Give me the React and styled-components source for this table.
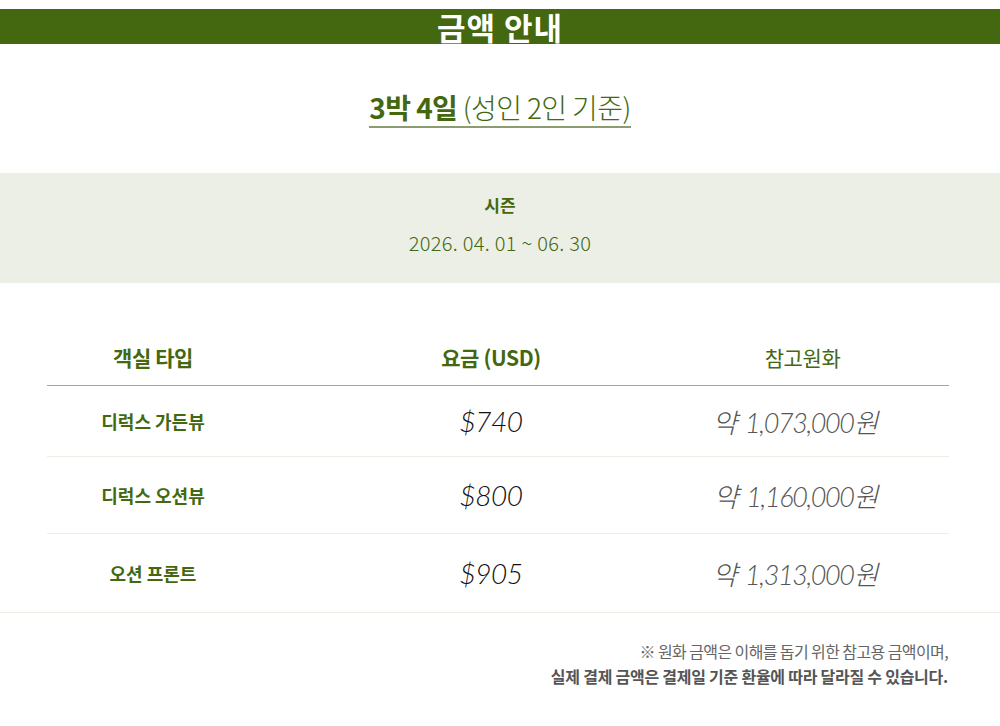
import React from "react";
import styled, { createGlobalStyle } from "styled-components";

const GREEN = "#43680f";

const Global = createGlobalStyle`
  html, body { margin: 0; padding: 0; background: #fff; }
  body { font-family: "Noto Sans CJK KR", "Noto Sans", sans-serif; }
  * { box-sizing: border-box; }
`;

const Page = styled.div`
  width: 1000px;
  padding-top: 9px;
`;

const HeaderBar = styled.h1`
  margin: 0;
  height: 35px;
  background: ${GREEN};
  color: #fff;
  text-align: center;
  font-size: 31px;
  line-height: 35px;
  font-weight: 700;
  letter-spacing: 1px;
`;

const SubtitleWrap = styled.div`
  display: flex;
  justify-content: center;
  margin-top: 48px;
`;

const Subtitle = styled.h2`
  margin: 0;
  display: inline-block;
  font-size: 28px;
  line-height: 30px;
  color: ${GREEN};
  font-weight: 300;
  letter-spacing: -0.6px;
  padding-bottom: 4px;
  border-bottom: 2px solid #8a9c70;
  b { font-weight: 700; }
`;

const Season = styled.section`
  margin-top: 45px;
  height: 110px;
  background: #ecefe6;
  display: flex;
  flex-direction: column;
  align-items: center;
  padding-top: 20px;
  gap: 13px;
  color: ${GREEN};
`;

const SeasonLabel = styled.div`
  font-size: 17px;
  line-height: 24px;
  font-weight: 700;
`;

const SeasonDate = styled.div`
  font-size: 20px;
  line-height: 26px;
  font-weight: 300;
  letter-spacing: 0.3px;
`;

const TableSection = styled.section`
  margin-top: 46px;
  padding: 0 51px 0 47px;
  border-bottom: 1px solid #eceee6;
`;

const Row = styled.div`
  display: grid;
  grid-template-columns: 212px 464px 1fr;
  align-items: center;
  height: ${(p) => p.$h}px;
  border-bottom: ${(p) => (p.$head ? "1px solid #9fab89" : p.$last ? "none" : "1px solid #eceee6")};
`;

const HeadCell = styled.div`
  text-align: center;
  font-size: 21px;
  font-weight: ${(p) => (p.$light ? 400 : 700)};
  color: ${GREEN};
  letter-spacing: -0.4px;
  padding-right: ${(p) => (p.$pr ? p.$pr : 0)}px;
`;

const RoomName = styled.div`
  text-align: center;
  font-size: 18px;
  font-weight: 700;
  color: ${GREEN};
`;

const Price = styled.div`
  text-align: center;
  font-family: "Lato", "Noto Sans", sans-serif;
  font-style: italic;
  font-weight: 300;
  font-size: 28px;
  color: #111;
  letter-spacing: -0.5px;
`;

const Won = styled.div`
  display: flex;
  justify-content: flex-end;
  min-width: 0;
  white-space: nowrap;
  padding-right: 72px;
  font-family: "Lato", "Noto Sans CJK KR", sans-serif;
  font-style: italic;
  font-weight: 300;
  font-size: 27px;
  color: #555;
  letter-spacing: -1.4px;
  word-spacing: 4px;
`;

const Note = styled.div`
  margin-top: 26px;
  padding-right: 52px;
  text-align: right;
  font-size: 16px;
  line-height: 25px;
  letter-spacing: -0.6px;
  color: #666;
`;

const NoteStrong = styled.div`
  font-weight: 700;
  color: #555;
  letter-spacing: -0.25px;
`;

const rows = [
  { name: "디럭스 가든뷰", usd: "$740", krw: "약 1,073,000원", h: 71 },
  { name: "디럭스 오션뷰", usd: "$800", krw: "약 1,160,000원", h: 77 },
  { name: "오션 프론트", usd: "$905", krw: "약 1,313,000원", h: 78 },
];

export default function App() {
  return (
    <Page>
      <Global />
      <HeaderBar>금액 안내</HeaderBar>
      <SubtitleWrap>
        <Subtitle>
          <b>3박 4일</b> (성인 2인 기준)
        </Subtitle>
      </SubtitleWrap>
      <Season>
        <SeasonLabel>시즌</SeasonLabel>
        <SeasonDate>2026. 04. 01 ~ 06. 30</SeasonDate>
      </Season>
      <TableSection>
        <Row $head $h={57}>
          <HeadCell>객실 타입</HeadCell>
          <HeadCell>요금 (USD)</HeadCell>
          <HeadCell $light $pr={67}>참고원화</HeadCell>
        </Row>
        {rows.map((r, i) => (
          <Row key={r.name} $h={r.h} $last={i === rows.length - 1}>
            <RoomName>{r.name}</RoomName>
            <Price>{r.usd}</Price>
            <Won>
              <span>{r.krw}</span>
            </Won>
          </Row>
        ))}
      </TableSection>
      <Note>
        <div>※ 원화 금액은 이해를 돕기 위한 참고용 금액이며,</div>
        <NoteStrong>실제 결제 금액은 결제일 기준 환율에 따라 달라질 수 있습니다.</NoteStrong>
      </Note>
    </Page>
  );
}
